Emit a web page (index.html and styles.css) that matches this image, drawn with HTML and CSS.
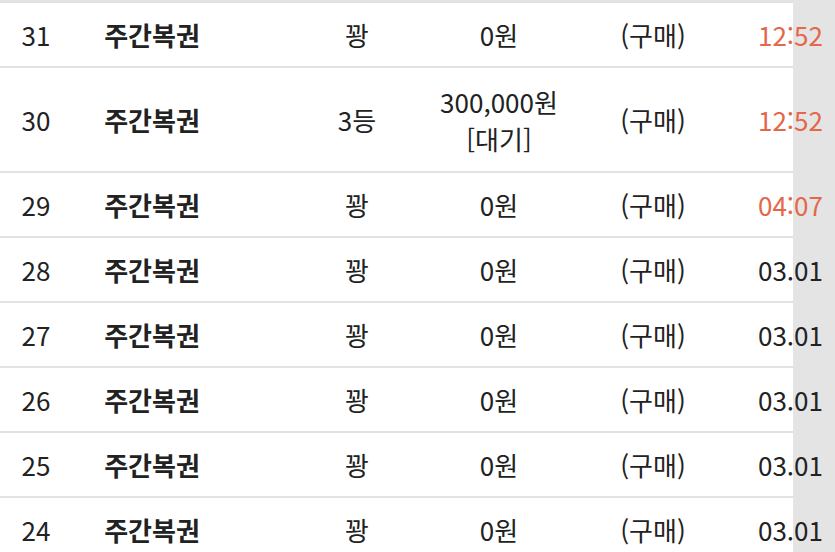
FILE: index.html
```html
<!DOCTYPE html>
<html lang="ko">
<head>
<meta charset="utf-8">
<link rel="stylesheet" href="styles.css">
</head>
<body>
<div class="list">
  <div class="row">
    <div class="c no">31</div><div class="c name">주간복권</div><div class="c res">꽝</div><div class="c amt">0원</div><div class="c buy">(구매)</div><div class="c time hot">12:52</div>
  </div>
  <div class="row tall">
    <div class="c no">30</div><div class="c name">주간복권</div><div class="c res">3등</div><div class="c amt">300,000원<br>[대기]</div><div class="c buy">(구매)</div><div class="c time hot">12:52</div>
  </div>
  <div class="row">
    <div class="c no">29</div><div class="c name">주간복권</div><div class="c res">꽝</div><div class="c amt">0원</div><div class="c buy">(구매)</div><div class="c time hot">04:07</div>
  </div>
  <div class="row">
    <div class="c no">28</div><div class="c name">주간복권</div><div class="c res">꽝</div><div class="c amt">0원</div><div class="c buy">(구매)</div><div class="c time">03.01</div>
  </div>
  <div class="row">
    <div class="c no">27</div><div class="c name">주간복권</div><div class="c res">꽝</div><div class="c amt">0원</div><div class="c buy">(구매)</div><div class="c time">03.01</div>
  </div>
  <div class="row">
    <div class="c no">26</div><div class="c name">주간복권</div><div class="c res">꽝</div><div class="c amt">0원</div><div class="c buy">(구매)</div><div class="c time">03.01</div>
  </div>
  <div class="row">
    <div class="c no">25</div><div class="c name">주간복권</div><div class="c res">꽝</div><div class="c amt">0원</div><div class="c buy">(구매)</div><div class="c time">03.01</div>
  </div>
  <div class="row">
    <div class="c no">24</div><div class="c name">주간복권</div><div class="c res">꽝</div><div class="c amt">0원</div><div class="c buy">(구매)</div><div class="c time">03.01</div>
  </div>
</div>
</body>
</html>
```
FILE: styles.css
```css
html, body {
  margin: 0;
  padding: 0;
  background: #e4e4e4;
  height: 100%;
  overflow: hidden;
}
body {
  font-family: "Noto Sans CJK KR", "Noto Sans", sans-serif;
  font-size: 26px;
  color: #222;
}
.list {
  width: 793px;
  background: #fff;
  margin-top: 1px;
  border-top: 2px solid #e2e2e2;
}
.row {
  display: grid;
  grid-template-columns: 72px 218px 134px 150px 158px 1fr;
  align-items: center;
  height: 63px;
  border-bottom: 2px solid #e2e2e2;
}
.row.tall {
  height: 103px;
}
.c {
  text-align: center;
  white-space: nowrap;
  line-height: 37px;
}
.name {
  font-weight: bold;
  padding-right: 58px;
}
.time {
  text-align: left;
  padding-left: 26px;
}
.hot {
  color: #e4674a;
}
```
